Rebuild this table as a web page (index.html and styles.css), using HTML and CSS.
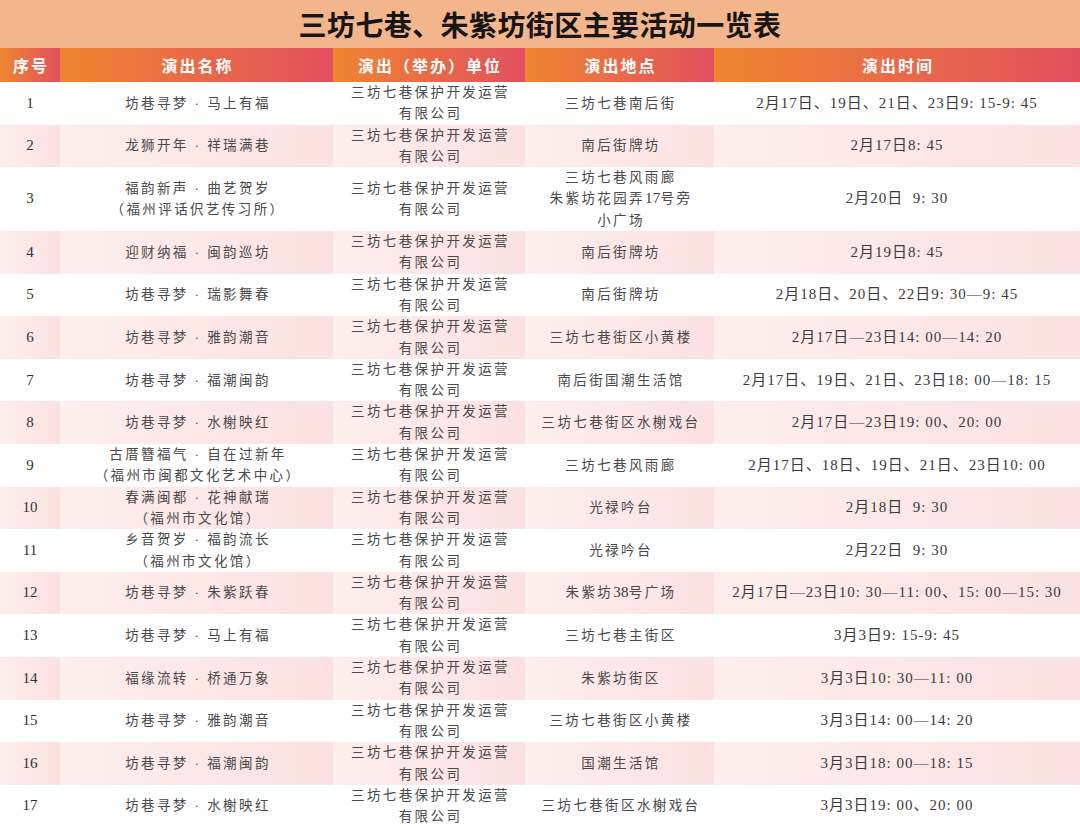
FILE: index.html
```html
<!DOCTYPE html>
<html lang="zh-CN">
<head>
<meta charset="utf-8">
<title>三坊七巷、朱紫坊街区主要活动一览表</title>
<link rel="stylesheet" href="styles.css">
</head>
<body>
<div class="sheet">
  <h1 class="title">三坊七巷、朱紫坊街区主要活动一览表</h1>
  <table class="grid">
    <colgroup>
      <col class="c-no">
      <col class="c-name">
      <col class="c-org">
      <col class="c-place">
      <col class="c-time">
    </colgroup>
    <thead>
      <tr>
        <th>序号</th>
        <th>演出名称</th>
        <th>演出（举办）单位</th>
        <th>演出地点</th>
        <th>演出时间</th>
      </tr>
    </thead>
    <tbody>
      <tr>
        <td class="no">1</td>
        <td>坊巷寻梦 · 马上有福</td>
        <td>三坊七巷保护开发运营<br>有限公司</td>
        <td>三坊七巷南后街</td>
        <td class="time">2月17日、19日、21日、23日9: 15-9: 45</td>
      </tr>
      <tr>
        <td class="no">2</td>
        <td>龙狮开年 · 祥瑞满巷</td>
        <td>三坊七巷保护开发运营<br>有限公司</td>
        <td>南后街牌坊</td>
        <td class="time">2月17日8: 45</td>
      </tr>
      <tr>
        <td class="no">3</td>
        <td>福韵新声 · 曲艺贺岁<br>（福州评话伬艺传习所）</td>
        <td>三坊七巷保护开发运营<br>有限公司</td>
        <td>三坊七巷风雨廊<br>朱紫坊花园弄<span class="num">17</span>号旁<br>小广场</td>
        <td class="time">2月20日&nbsp; 9: 30</td>
      </tr>
      <tr>
        <td class="no">4</td>
        <td>迎财纳福 · 闽韵巡坊</td>
        <td>三坊七巷保护开发运营<br>有限公司</td>
        <td>南后街牌坊</td>
        <td class="time">2月19日8: 45</td>
      </tr>
      <tr>
        <td class="no">5</td>
        <td>坊巷寻梦 · 瑞影舞春</td>
        <td>三坊七巷保护开发运营<br>有限公司</td>
        <td>南后街牌坊</td>
        <td class="time">2月18日、20日、22日9: 30—9: 45</td>
      </tr>
      <tr>
        <td class="no">6</td>
        <td>坊巷寻梦 · 雅韵潮音</td>
        <td>三坊七巷保护开发运营<br>有限公司</td>
        <td>三坊七巷街区小黄楼</td>
        <td class="time">2月17日—23日14: 00—14: 20</td>
      </tr>
      <tr>
        <td class="no">7</td>
        <td>坊巷寻梦 · 福潮闽韵</td>
        <td>三坊七巷保护开发运营<br>有限公司</td>
        <td>南后街国潮生活馆</td>
        <td class="time">2月17日、19日、21日、23日18: 00—18: 15</td>
      </tr>
      <tr>
        <td class="no">8</td>
        <td>坊巷寻梦 · 水榭映红</td>
        <td>三坊七巷保护开发运营<br>有限公司</td>
        <td>三坊七巷街区水榭戏台</td>
        <td class="time">2月17日—23日19: 00、20: 00</td>
      </tr>
      <tr>
        <td class="no">9</td>
        <td>古厝簪福气 · 自在过新年<br>（福州市闽都文化艺术中心）</td>
        <td>三坊七巷保护开发运营<br>有限公司</td>
        <td>三坊七巷风雨廊</td>
        <td class="time">2月17日、18日、19日、21日、23日10: 00</td>
      </tr>
      <tr>
        <td class="no">10</td>
        <td>春满闽都 · 花神献瑞<br>（福州市文化馆）</td>
        <td>三坊七巷保护开发运营<br>有限公司</td>
        <td>光禄吟台</td>
        <td class="time">2月18日&nbsp; 9: 30</td>
      </tr>
      <tr>
        <td class="no">11</td>
        <td>乡音贺岁 · 福韵流长<br>（福州市文化馆）</td>
        <td>三坊七巷保护开发运营<br>有限公司</td>
        <td>光禄吟台</td>
        <td class="time">2月22日&nbsp; 9: 30</td>
      </tr>
      <tr>
        <td class="no">12</td>
        <td>坊巷寻梦 · 朱紫跃春</td>
        <td>三坊七巷保护开发运营<br>有限公司</td>
        <td>朱紫坊<span class="num">38</span>号广场</td>
        <td class="time">2月17日—23日10: 30—11: 00、15: 00—15: 30</td>
      </tr>
      <tr>
        <td class="no">13</td>
        <td>坊巷寻梦 · 马上有福</td>
        <td>三坊七巷保护开发运营<br>有限公司</td>
        <td>三坊七巷主街区</td>
        <td class="time">3月3日9: 15-9: 45</td>
      </tr>
      <tr>
        <td class="no">14</td>
        <td>福缘流转 · 桥通万象</td>
        <td>三坊七巷保护开发运营<br>有限公司</td>
        <td>朱紫坊街区</td>
        <td class="time">3月3日10: 30—11: 00</td>
      </tr>
      <tr>
        <td class="no">15</td>
        <td>坊巷寻梦 · 雅韵潮音</td>
        <td>三坊七巷保护开发运营<br>有限公司</td>
        <td>三坊七巷街区小黄楼</td>
        <td class="time">3月3日14: 00—14: 20</td>
      </tr>
      <tr>
        <td class="no">16</td>
        <td>坊巷寻梦 · 福潮闽韵</td>
        <td>三坊七巷保护开发运营<br>有限公司</td>
        <td>国潮生活馆</td>
        <td class="time">3月3日18: 00—18: 15</td>
      </tr>
      <tr>
        <td class="no">17</td>
        <td>坊巷寻梦 · 水榭映红</td>
        <td>三坊七巷保护开发运营<br>有限公司</td>
        <td>三坊七巷街区水榭戏台</td>
        <td class="time">3月3日19: 00、20: 00</td>
      </tr>
    </tbody>
  </table>
</div>
</body>
</html>
```

FILE: styles.css
```css
html, body {
  margin: 0;
  padding: 0;
  background: #ffffff;
}

.sheet {
  width: 1080px;
  overflow: hidden;
}

.title {
  margin: 0;
  height: 48px;
  line-height: 48px;
  background: #f3b58c;
  color: #161616;
  text-align: center;
  font-family: "Noto Sans CJK SC", "Noto Sans", sans-serif;
  font-weight: 700;
  font-size: 28px;
  letter-spacing: 0.4px;
}

.grid {
  width: 1080px;
  border-collapse: collapse;
  table-layout: fixed;
}

.c-no { width: 60px; }
.c-name { width: 273px; }
.c-org { width: 192px; }
.c-place { width: 189px; }
.c-time { width: 366px; }

.grid th {
  height: 34px;
  padding: 0 0 0 2px;
  background: linear-gradient(to right, #ef8530, #e2505e);
  color: #ffffff;
  font-family: "Noto Sans CJK SC", "Noto Sans", sans-serif;
  font-weight: 700;
  font-size: 16px;
  letter-spacing: 2px;
  text-align: center;
  vertical-align: middle;
}

.grid td {
  padding: 0 0 0 3px;
  line-height: 21.3px;
  text-align: center;
  vertical-align: middle;
  color: #4a4a4a;
  font-family: "Liberation Serif", "Noto Sans CJK SC", serif;
  font-size: 13.5px;
  letter-spacing: 2.4px;
  white-space: nowrap;
}

.grid td .num {
  font-size: 15px;
  letter-spacing: 0.3px;
  color: #3a3a3a;
}

.grid tbody tr:nth-child(even) td {
  background: linear-gradient(to right, #fdefec, #fbe1e1);
}

.grid td.no {
  padding: 0;
  font-size: 15px;
  letter-spacing: 0;
  color: #333333;
}

.grid td.time {
  padding: 0;
  font-size: 15px;
  letter-spacing: 1px;
  color: #3a3a3a;
}
```
